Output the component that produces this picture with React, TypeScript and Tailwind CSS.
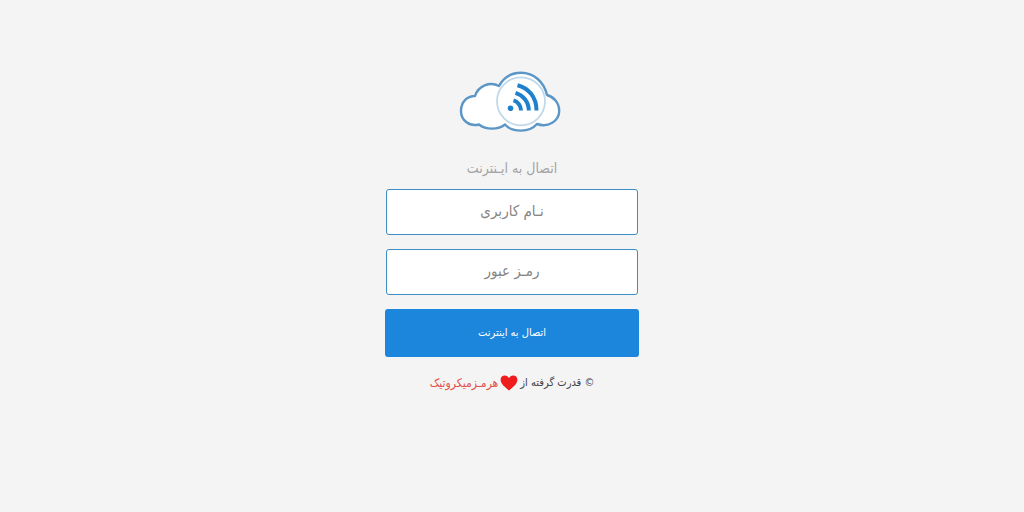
import React from "react";

function CloudLogo() {
  return (
    <svg width="106" height="62" viewBox="0 0 106 62" fill="none" aria-hidden="true">
      <path
        d="M16 25 A17 17 0 0 1 40 15 C45 6 53 1.8 62 1.8 C75 1.8 85 11 88 24 C95 26 100.2 32 100.2 40 C100.2 50 89 57 78 53 C74 57.5 68 59.6 62 59.6 C56 59.6 50 58 46 53.5 C39 59 27 59 20 53.5 C10 56 2 49 2 40 C2 31 8 25 16 25 Z"
        fill="#ffffff"
        stroke="#5b96c6"
        strokeWidth="2.4"
        strokeLinejoin="round"
      />
      <circle cx="62" cy="30.3" r="24" fill="#ffffff" stroke="#bfd8ea" strokeWidth="1.8" />
      <circle cx="51.5" cy="37.2" r="2.8" fill="#1f80cc" />
      <g stroke="#1f80cc" strokeWidth="4">
        <path d="M54.5 29.4 C58.5 30.5 62 34.5 62 39.5" />
        <path d="M56.5 21.8 C64 24 69.8 31 69.8 39.5" />
        <path d="M58.5 14.2 C69.5 17 77.5 26 77.5 39.5" />
      </g>
    </svg>
  );
}

function Field({ id, label, type }: { id: string; label: string; type: string }) {
  return (
    <div className="px-px">
      <input
        id={id}
        type={type}
        aria-label={label}
        placeholder={label}
        className="block h-[46px] w-full rounded-[3px] border border-[#3c8dc5] bg-white px-3 pb-0.5 text-center text-[15px] text-[#555555] outline-none placeholder:text-[#858585]"
      />
    </div>
  );
}

export default function App() {
  return (
    <main
      dir="rtl"
      lang="fa"
      className="flex min-h-screen flex-col items-center bg-[#f4f4f4] px-4 pt-[71px] font-['DejaVu_Sans_Condensed','DejaVu_Sans',sans-serif]"
    >
      <CloudLogo />
      <form
        className="mt-[23px] flex w-full max-w-[254px] flex-col"
        onSubmit={(e) => e.preventDefault()}
      >
        <h1 className="mb-[9px] text-center text-sm leading-6 text-[#a3a3a3]">
          اتصال به ایـنترنت
        </h1>
        <div className="flex flex-col gap-[14px]">
          <Field id="username" label="نـام کاربری" type="text" />
          <Field id="password" label="رمـز عبور" type="password" />
          <button
            type="submit"
            className="h-12 rounded-[3px] bg-[#1c85dc] text-[11px] text-white"
          >
            اتصال به اینترنت
          </button>
        </div>
      </form>
      <footer className="mt-3 flex items-center gap-0.5 text-xs leading-7 text-[#444444]">
        <span className="text-[11px]">© قدرت گرفته از</span>
        <svg width="18" height="16" viewBox="0 0 18 16" fill="#ee1c1c" aria-hidden="true">
          <path d="M9 15.6 C7 13.5 1 9.5 .6 5.2 C.4 2.3 2.4 .6 4.8 .6 C6.7 .6 8.2 1.7 9 3.2 C9.8 1.7 11.3 .6 13.2 .6 C15.6 .6 17.6 2.3 17.4 5.2 C17 9.5 11 13.5 9 15.6 Z" />
        </svg>
        <a href="#" className="text-[#e2504c]">
          هرمـزمیکروتیک
        </a>
      </footer>
    </main>
  );
}
